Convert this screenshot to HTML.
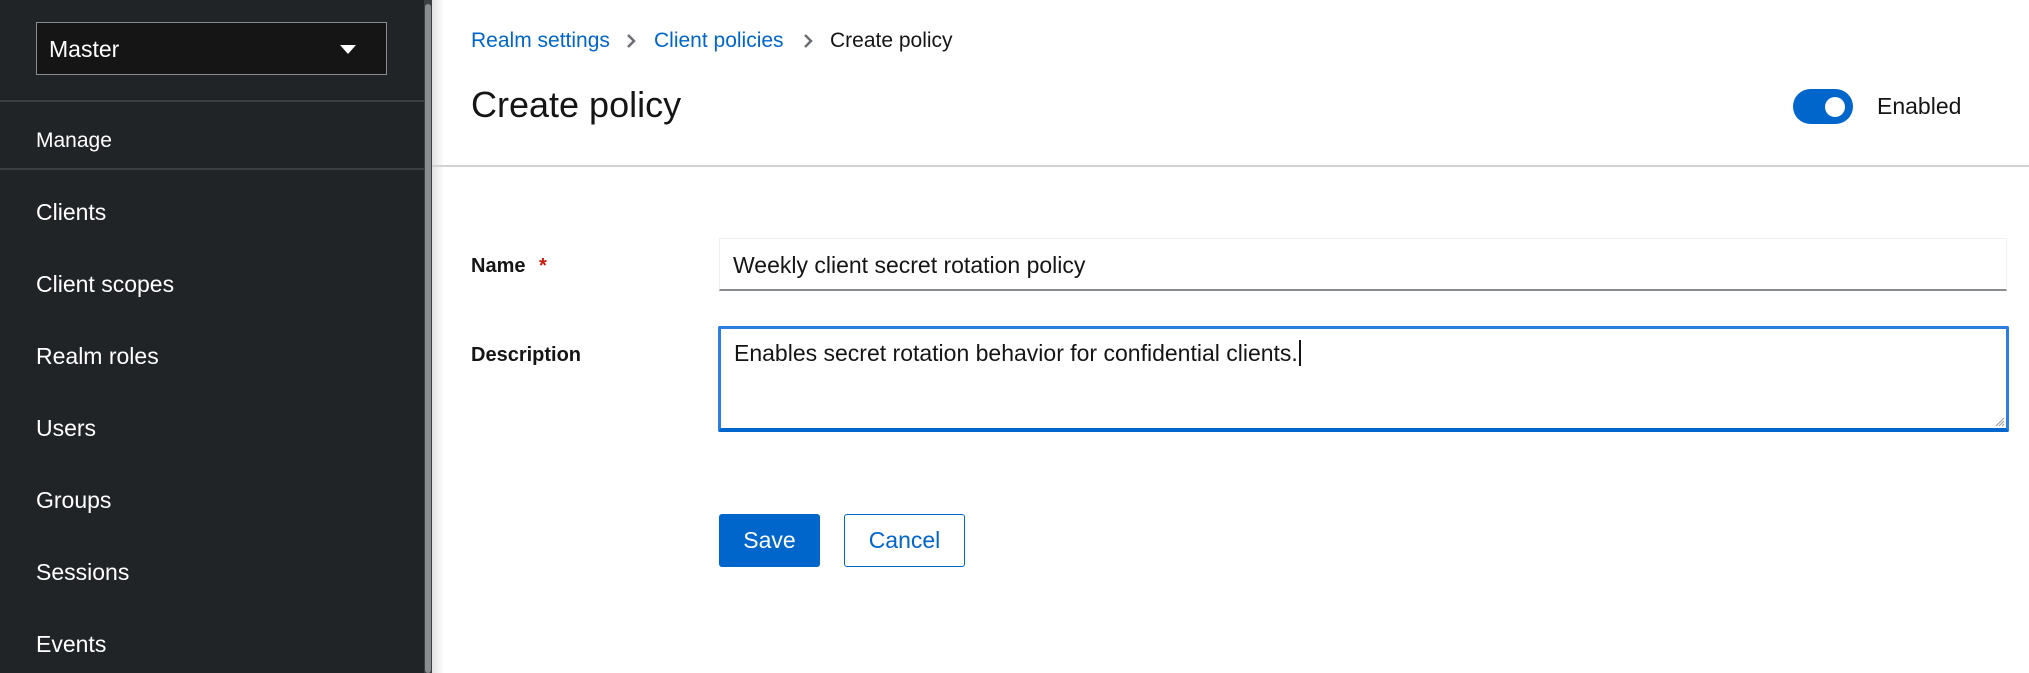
<!DOCTYPE html>
<html><head><style>
*{margin:0;padding:0;box-sizing:border-box}
body{width:2029px;height:673px;overflow:hidden;font-family:"Liberation Sans",sans-serif;background:#fff;position:relative}
.sb{position:absolute;left:0;top:0;width:427px;height:673px;background:#212427}
.scroll{position:absolute;left:424px;top:0;width:8px;height:673px;background:#3c3f42}
.scroll i{position:absolute;left:1px;top:4px;width:6px;height:669px;background:#8a8d90;border-radius:3px}
.dd{position:absolute;left:36px;top:22px;width:351px;height:53px;background:#151515;border:1px solid #8a8d90;color:#fff;font-size:23px;padding:13px 0 0 12px}
.dd:after{content:"";position:absolute;right:30px;top:22px;border-left:8px solid transparent;border-right:8px solid transparent;border-top:9px solid #fff}
.ln{position:absolute;left:0;width:424px;height:2px;background:#3c3f42}
.nav{position:absolute;left:36px;color:#fff;font-size:23px}
.shadow{position:absolute;left:432px;top:0;width:12px;height:673px;background:linear-gradient(90deg,rgba(0,0,0,.12),rgba(0,0,0,0))}
.bc{position:absolute;top:29px;left:471px;font-size:21px;color:#06c}
.bc span{position:absolute;white-space:nowrap}
.t{position:absolute;left:471px;top:84px;font-size:36px;color:#151515}
.hr{position:absolute;left:432px;top:165px;width:1597px;height:2px;background:#d2d2d2}
.tog{position:absolute;left:1793px;top:89px;width:60px;height:35px;background:#06c;border-radius:18px}
.tog i{position:absolute;right:8px;top:8px;width:20px;height:20px;border-radius:50%;background:#fff}
.lbl{position:absolute;left:471px;font-size:20px;font-weight:bold;color:#151515}
.inp{position:absolute;left:719px;top:238px;width:1288px;height:53px;border:1px solid #f0f0f0;border-bottom:2px solid #8a8d90;font-size:23px;color:#151515;padding:13px 0 0 13px}
.ta{position:absolute;left:718px;top:326px;width:1291px;height:106px;border:3px solid #2b7ee0;border-bottom-width:4px;border-bottom-color:#06c;border-radius:2px;font-size:23px;color:#151515;padding:11px 0 0 13px}
.btn{position:absolute;top:514px;height:53px;font-size:23px;border-radius:3px;padding-top:13px;text-align:center}
</style></head><body>
<div class="sb">
<div class="dd">Master</div>
<div class="ln" style="top:100px"></div>
<div class="nav" style="top:129px;font-size:21px">Manage</div>
<div class="ln" style="top:168px"></div>
<div class="nav" style="top:199px">Clients</div>
<div class="nav" style="top:271px">Client scopes</div>
<div class="nav" style="top:343px">Realm roles</div>
<div class="nav" style="top:415px">Users</div>
<div class="nav" style="top:487px">Groups</div>
<div class="nav" style="top:559px">Sessions</div>
<div class="nav" style="top:631px">Events</div>
</div>
<div class="scroll"><i></i></div>
<div class="shadow"></div>
<div class="bc"><span style="left:0">Realm settings</span><svg style="position:absolute;left:155px;top:5px" width="10" height="14" viewBox="0 0 10 14"><path d="M2 1l6 6-6 6" fill="none" stroke="#6a6e73" stroke-width="2.5"/></svg><span style="left:183px">Client policies</span><svg style="position:absolute;left:332px;top:5px" width="10" height="14" viewBox="0 0 10 14"><path d="M2 1l6 6-6 6" fill="none" stroke="#6a6e73" stroke-width="2.5"/></svg><span style="left:359px;color:#151515">Create policy</span></div>
<div class="t">Create policy</div>
<div class="tog"><i></i></div>
<div style="position:absolute;left:1877px;top:93px;font-size:23px;color:#151515">Enabled</div>
<div class="hr"></div>
<div class="lbl" style="top:255px">Name <span style="color:#c9190b;margin-left:8px">*</span></div>
<div class="inp">Weekly client secret rotation policy</div>
<div class="lbl" style="top:344px">Description</div>
<div class="ta">Enables secret rotation behavior for confidential clients.<span style="border-left:2px solid #151515;margin-left:1px"></span>
<svg style="position:absolute;right:1px;bottom:1px" width="10" height="10" viewBox="0 0 10 10"><path d="M9 1L1 9M9 4L4 9M9 7L7 9" stroke="#999" stroke-width="1"/></svg></div>
<div class="btn" style="left:719px;width:101px;background:#06c;color:#fff">Save</div>
<div class="btn" style="left:844px;width:121px;border:1px solid #06c;color:#06c;padding-top:12px">Cancel</div>
</body></html>
